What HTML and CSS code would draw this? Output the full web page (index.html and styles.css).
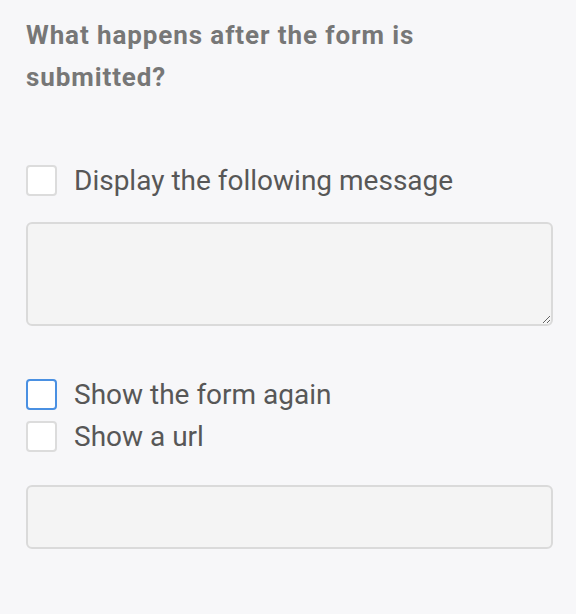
FILE: index.html
```html
<!DOCTYPE html>
<html lang="en">
<head>
  <meta charset="UTF-8">
  <meta name="viewport" content="width=device-width, initial-scale=1.0">
  <title>After submit</title>
  <link rel="stylesheet" href="styles.css">
</head>
<body>
  <section class="panel">
    <h2 class="title">What happens after the form is submitted?</h2>

    <label class="option option-first">
      <input type="checkbox" class="box">
      <span>Display the following message</span>
    </label>
    <textarea class="field field-message"></textarea>

    <div class="options">
      <label class="option">
        <input type="checkbox" class="box box-focus">
        <span>Show the form again</span>
      </label>
      <label class="option">
        <input type="checkbox" class="box">
        <span>Show a url</span>
      </label>
    </div>
    <input type="text" class="field field-url">
  </section>
</body>
</html>
```

FILE: styles.css
```css
body {
  margin: 0;
  background: #f7f7f9;
  font-family: Roboto, 'Noto Sans', sans-serif;
  color: #575757;
}

.panel {
  padding: 14px 23px 60px 26px;
}

.title {
  margin: 0;
  font-size: 26px;
  font-weight: 700;
  letter-spacing: 0.9px;
  line-height: 42px;
  color: #777;
  max-width: 420px;
}

.option {
  display: flex;
  align-items: center;
  gap: 17px;
  font-size: 28px;
  line-height: 31px;
}

.option-first {
  margin-top: 67px;
}

.options {
  display: flex;
  flex-direction: column;
  gap: 11px;
  margin-top: 53px;
}

.box {
  appearance: none;
  margin: 0;
  width: 31px;
  height: 31px;
  flex: none;
  border: 2px solid #dcdcdc;
  border-radius: 4px;
  background: #fff;
}

.box-focus {
  border-color: #4a90e2;
}

.field {
  display: block;
  box-sizing: border-box;
  width: 527px;
  margin: 0;
  border: 2px solid #dadada;
  border-radius: 6px;
  background: #f4f4f4;
  outline: none;
}

.field-message {
  height: 104px;
  margin-top: 26px;
  resize: both;
}

.field-url {
  height: 64px;
  margin-top: 33px;
}
```
